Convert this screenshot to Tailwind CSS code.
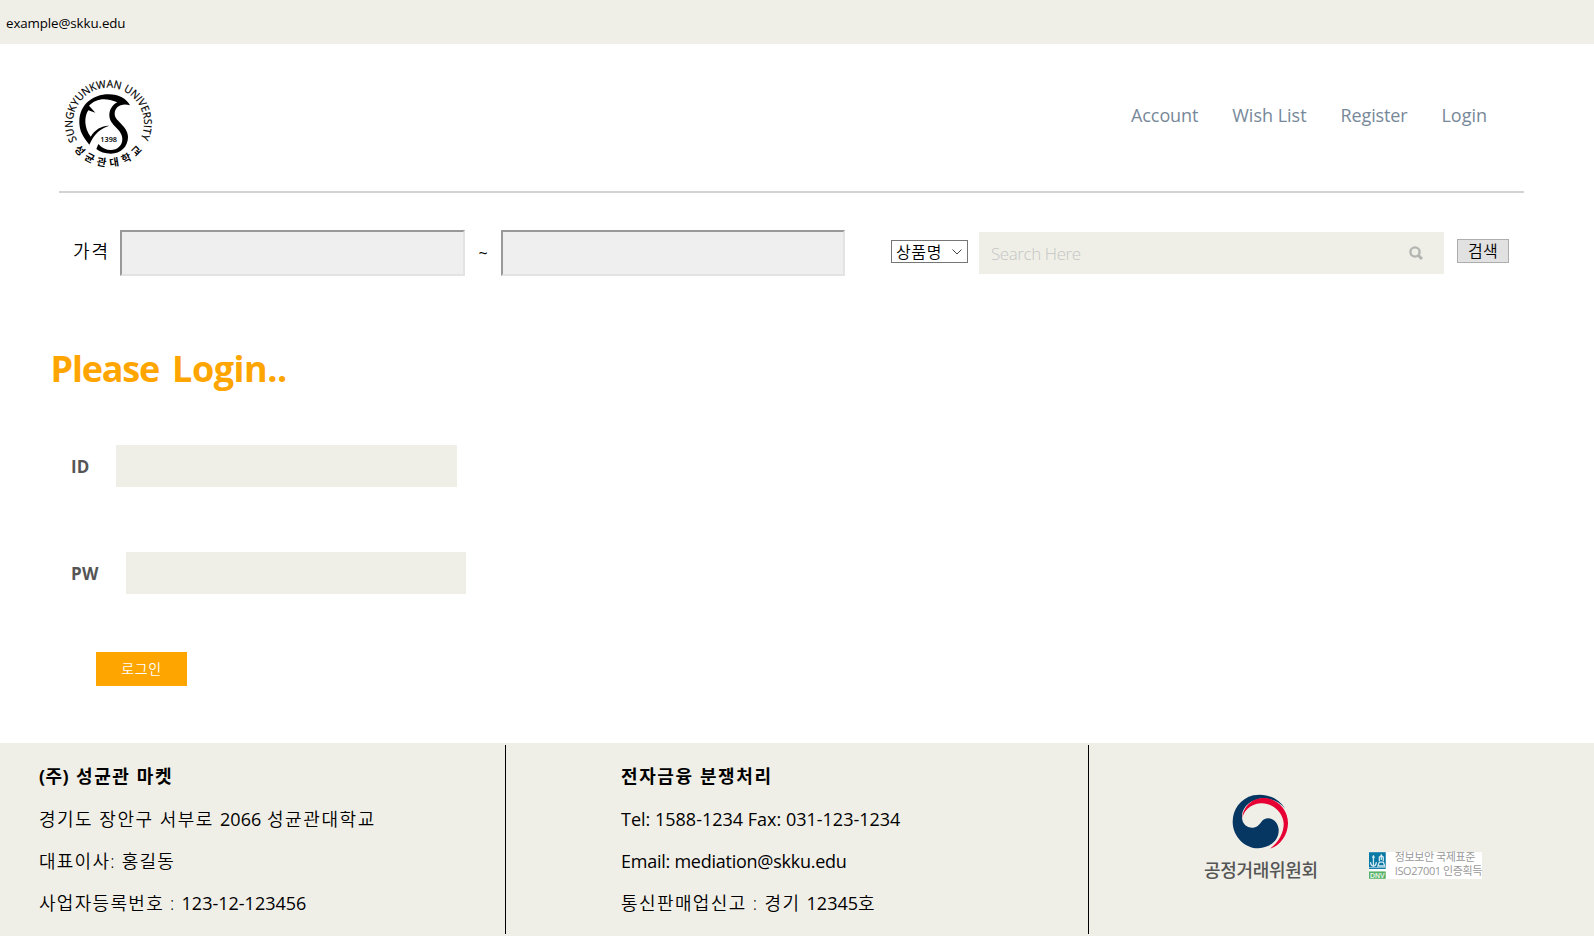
<!DOCTYPE html>
<html lang="ko">
<head>
<meta charset="utf-8">
<title>성균관 마켓</title>
<script src="https://cdn.jsdelivr.net/npm/@tailwindcss/browser@4"></script>
</head>
<body class="h-[936px] w-[1594px] overflow-hidden bg-white font-['Open_Sans','Noto_Sans_CJK_KR',sans-serif] text-[18px] text-black">
<div class="flex h-11 items-center bg-[#f0efe7] pl-[6px] text-[13.33px] leading-5"><span class="mt-[2px] tracking-[-0.1px]">example@skku.edu</span></div>

<header class="ml-[59px] flex h-[149px] w-[1465px] justify-between border-b-2 border-[#d3d3d3]">
  <svg class="mt-[31px] ml-px size-24" viewBox="180 225 288 288" aria-label="성균관대학교">
    <defs>
      <path id="top" d="M231 421A107 107 0 1 1 420.500 418.500"/>
      <path id="bottom" d="M222 448A129 129 0 0 0 428 448"/>
    </defs>
    <path d="M268 434C249 410 237 392 238 362C240 315 277 283 326 283C357 283 379 296 390 316C365 308 344 320 344 342C344 364 384 378 384 411C384 441 361 461 333 461C315 461 300 456 289 447L295 432C306 444 319 450 332 450C353 450 367 436 367 417C367 387 328 377 328 346C328 329 337 315 352 307C314 291 287 297 267 317L270 320L286 338L265 331C252 349 252 384 272 410C285 388 307 376 328 377C300 386 283 401 268 434Z"/>
    <text class="font-['Open_Sans',sans-serif]" font-size="32" font-weight="500" stroke="#000" stroke-width=".6"><textPath href="#top" textLength="436" lengthAdjust="spacingAndGlyphs">SUNGKYUNKWAN UNIVERSITY</textPath></text>
    <text class="font-['Noto_Sans_CJK_KR',sans-serif]" font-size="31" font-weight="700"><textPath href="#bottom" textLength="236">성균관대학교</textPath></text>
    <text class="font-['Open_Sans',sans-serif]" x="301" y="425" font-size="23" font-weight="600" textLength="50" lengthAdjust="spacingAndGlyphs">1398</text>
  </svg>
  <nav class="mt-[59px] mr-[37px] flex h-6 gap-[34px] leading-6 text-[#778899]">
    <a class="tracking-[-0.12px]">Account</a><a>Wish List</a><a class="tracking-[-0.15px]">Register</a><a>Login</a>
  </nav>
</header>

<form class="mt-[37px] flex h-[46px] items-start pl-[73px]">
  <label class="w-[47px] pt-[9px] leading-6 font-[350] tracking-[1.9px]">가격</label>
  <input class="h-[46px] w-[345px] border-2 border-t-[#999] border-r-[#e3e3e3] border-b-[#e3e3e3] border-l-[#999] bg-[#efefef]">
  <span class="w-9 pt-[11px] text-center text-[16px] leading-6">~</span>
  <input class="h-[46px] w-[344px] border-2 border-t-[#999] border-r-[#e3e3e3] border-b-[#e3e3e3] border-l-[#999] bg-[#efefef]">
  <div class="mt-[10px] ml-[46px] flex h-[23px] w-[77px] items-center justify-between border border-[#767676] pr-[5px] pl-1 text-[16px] leading-5">
    <span class="font-[350] tracking-[0.6px]">상품명</span>
    <svg class="h-[6px] w-[10px]" viewBox="0 0 10 6" fill="none" stroke="#444"><path d="M.5 .5 5 5 9.500 .5"/></svg>
  </div>
  <div class="mt-[2px] ml-[11px] flex h-[42px] w-[465px] items-start justify-between bg-[#f0efe7] pr-[21px] pl-3">
    <span class="mt-[10px] text-[17px] leading-6 font-light tracking-[-0.42px] text-[#c4c6c6]">Search Here</span>
    <svg class="mt-[14px] size-[14px]" viewBox="0 0 14 14" fill="none" stroke="#b2b5b2"><circle cx="6" cy="6" r="4.600" stroke-width="2.400"/><path d="m9.500 9.500 3.500 3.500" stroke-width="3"/></svg>
  </div>
  <button type="button" class="mt-[9px] ml-[13px] h-6 w-[52px] border border-[#adadad] bg-[#e1e1e1] text-[16px] leading-5 font-[350] tracking-[0.4px]">검색</button>
</form>

<main class="h-[467px] pt-[69px]">
  <h1 class="flex gap-[13px] pl-[50.500px] text-[36px] leading-[48px] font-bold text-[#ffa500]"><span class="tracking-[-1.2px]">Please</span> <span class="tracking-[-0.5px]">Login..</span></h1>
  <div class="mt-[52px] flex h-[42px] items-start pl-[71px] text-[17px] font-bold text-[#555]">
    <label class="w-[45px] pt-[10px] leading-6">ID</label><input class="h-[42px] w-[341px] bg-[#f0efe7]">
  </div>
  <div class="mt-[65px] flex h-[42px] items-start pl-[71px] text-[17px] font-bold text-[#555]">
    <label class="w-[55px] pt-[10px] leading-6 tracking-[0.3px]">PW</label><input type="password" class="h-[42px] w-[340px] bg-[#f0efe7]">
  </div>
  <button type="button" class="mt-[58px] ml-24 block h-[34px] w-[91px] bg-[#ffa500] text-[14px] leading-5 font-[350] tracking-[0.7px] text-white">로그인</button>
</main>

<footer class="flex h-[193px] bg-[#f0efe7] py-[2px] leading-[42px]">
  <section class="w-[506px] border-r border-black pt-[11px] pl-[39px]">
    <h2 class="mb-[2px] leading-10 font-bold"><span class="tracking-[0.4px]">(주) </span><span class="ml-[2px] tracking-[1.6px]">성균관 마켓</span></h2>
    <p><span class="font-[350] tracking-[1.5px]">경기도 장안구 서부로 </span>2066 <span class="ml-px font-[350] tracking-[1.6px]">성균관대학교</span></p>
    <p class="font-[350] tracking-[1.25px]">대표이사: 홍길동</p>
    <p><span class="font-[350] tracking-[1.3px]">사업자등록번호 : </span>123-12-123456</p>
  </section>
  <section class="w-[583px] border-r border-black pt-[11px] pl-[115px]">
    <h2 class="mb-[2px] leading-10 font-bold tracking-[1.6px]">전자금융 분쟁처리</h2>
    <p>Tel: 1588-1234 Fax: 031-123-1234</p>
    <p class="tracking-[-0.25px]">Email: mediation@skku.edu</p>
    <p><span class="font-[350] tracking-[1.4px]">통신판매업신고 : 경기 </span>12345<span class="font-[350]">호</span></p>
  </section>
  <section class="flex pt-[49px] pl-[115px]">
    <div class="w-[114px]">
      <svg class="ml-[28px] h-[56px] w-[57px]" viewBox="126 42 171 168">
        <path fill="#063763" d="M286 86C264 53 228 38 190 46C150 56 128 90 128 125C128 170 165 205 205 205C240 203 268 180 266 148C264 128 250 115 235 115C215 116 214 130 203 138C188 148 166 144 158 124C150 97 165 67 205 57C235 52 265 62 286 86Z"/>
        <path fill="#e60033" d="M157 115C158 78 190 52 225 54C265 58 294 90 294 130C294 165 270 198 240 206C268 185 282 155 281 130C279 95 245 68 212 70C180 72 160 95 157 115Z"/>
      </svg>
      <p class="mt-[8px] text-[18px] leading-6 font-medium tracking-[-0.3px] whitespace-nowrap text-[#555]">공정거래위원회</p>
    </div>
    <div class="mt-[58px] ml-[51px] flex h-[27px] w-[113px] bg-white">
      <svg class="h-[27px] w-[17px]" viewBox="0 0 17 27">
        <path fill="#0878a5" d="M0 0H17V17H0Z"/><path fill="#55b267" d="M0 19.500H17V27H0Z"/>
        <path stroke="#d5eaf0" stroke-width="1.300" fill="none" d="M4.500 3V14M1.500 10Q2 14 4.500 14T7.500 10M3 5H6M12.500 2V8M10.500 9V5L12.500 3.500 14.500 5V9M9 14 10.500 10H14.500L16 14Z"/>
        <path stroke="#8cc0d4" d="M0 15.500H17"/>
        <text x="1" y="26" font-size="7" font-weight="700" fill="#e3f3e5" textLength="15" lengthAdjust="spacingAndGlyphs" class="font-['Liberation_Sans',sans-serif]">DNV</text>
      </svg>
      <p class="pl-[9px] text-[11px] leading-[14px] tracking-[-0.4px] whitespace-nowrap text-[#999]"><span class="-mt-[2px] block">정보보안 국제표준</span><span class="block">ISO27001 인증획득</span></p>
    </div>
  </section>
</footer>
</body>
</html>
